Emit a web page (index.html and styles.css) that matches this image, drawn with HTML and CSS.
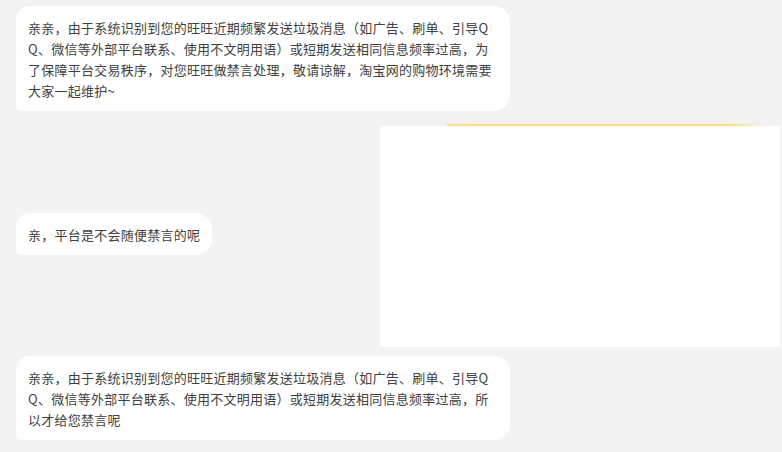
FILE: index.html
```html
<!DOCTYPE html>
<html lang="zh-CN">
<head>
  <meta charset="UTF-8" />
  <meta name="viewport" content="width=device-width, initial-scale=1.0"/>
  <title>客服消息</title>
  <link rel="stylesheet" href="styles.css">
</head>
<body>
  <div class="chat">
    <div class="bubble">亲亲，由于系统识别到您的旺旺近期频繁发送垃圾消息（如广告、刷单、引导QQ、微信等外部平台联系、使用不文明用语）或短期发送相同信息频率过高，为了保障平台交易秩序，对您旺旺做禁言处理，敬请谅解，淘宝网的购物环境需要大家一起维护~</div>

    <!-- short reply next to the customer's screenshot -->
    <div class="row">
      <div class="bubble short">亲，平台是不会随便禁言的呢</div>
      <div class="shot"></div>
    </div>

    <div class="bubble last">亲亲，由于系统识别到您的旺旺近期频繁发送垃圾消息（如广告、刷单、引导QQ、微信等外部平台联系、使用不文明用语）或短期发送相同信息频率过高，所以才给您禁言呢</div>
  </div>
</body>
</html>
```

FILE: styles.css
```css
html, body {
  margin: 0;
  height: 100%;
  background: #f3f3f3;
  overflow: hidden;
}

.chat {
  padding: 6px 2px 0 16px;
  font-family: "Noto Sans CJK SC", "Noto Sans", sans-serif;
  font-size: 13px;
  color: #404040;
}

.bubble {
  box-sizing: border-box;
  width: fit-content;
  max-width: 494px;
  padding: 11px 12px 10px;
  line-height: 21px;
  letter-spacing: 0.25px;
  word-break: break-all;
  background: #fff;
  border-radius: 14px 16px 16px 6px;
}

.row {
  display: flex;
  align-items: center;
  justify-content: space-between;
  margin-top: 15px;
}

.bubble.short {
  margin-bottom: 5px;
}

.shot {
  position: relative;
  width: 400px;
  height: 221px;
  background: #fff;
}

/* yellow strip along the top of the pasted screenshot */
.shot::before {
  content: "";
  position: absolute;
  left: 67px;
  right: 20px;
  top: -2px;
  height: 2px;
  background: linear-gradient(to right, rgba(246, 218, 120, 0.6), #f6dc86 8%, #f6dc86 90%, rgba(246, 218, 120, 0));
  box-shadow: 0 0 2px rgba(246, 218, 120, 0.7);
}

.bubble.last {
  margin-top: 9px;
}
```
